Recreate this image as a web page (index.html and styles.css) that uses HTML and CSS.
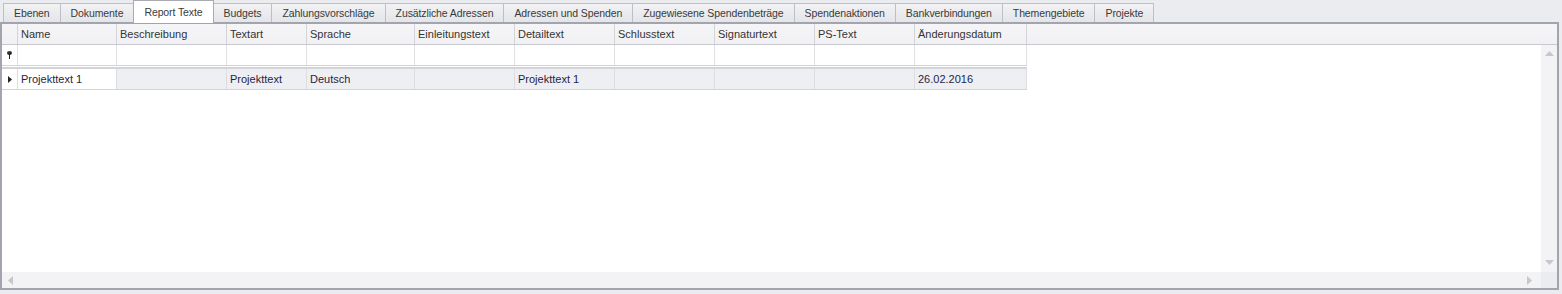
FILE: index.html
```html
<!DOCTYPE html>
<html lang="de">

<head>
  <meta charset="UTF-8">
  <title>Report Texte</title>
  <link rel="stylesheet" href="styles.css">
</head>

<body>
  <div id="tab-strip">
    <div class="tab">Ebenen</div>
    <div class="tab">Dokumente</div>
    <div class="tab selected">Report Texte</div>
    <div class="tab">Budgets</div>
    <div class="tab">Zahlungsvorschläge</div>
    <div class="tab">Zusätzliche Adressen</div>
    <div class="tab">Adressen und Spenden</div>
    <div class="tab">Zugewiesene Spendenbeträge</div>
    <div class="tab">Spendenaktionen</div>
    <div class="tab">Bankverbindungen</div>
    <div class="tab">Themengebiete</div>
    <div class="tab">Projekte</div>
  </div>

  <div id="grid-frame">
    <div class="grid-header">
      <div class="cell indicator"></div>
      <div class="cell c-name">Name</div>
      <div class="cell c-desc">Beschreibung</div>
      <div class="cell c-type">Textart</div>
      <div class="cell c-lang">Sprache</div>
      <div class="cell c-100">Einleitungstext</div>
      <div class="cell c-100">Detailtext</div>
      <div class="cell c-100">Schlusstext</div>
      <div class="cell c-100">Signaturtext</div>
      <div class="cell c-100">PS-Text</div>
      <div class="cell c-date">Änderungsdatum</div>
    </div>

    <div class="grid-body">
      <div class="rows">
        <div class="row filter-row">
          <div class="cell indicator">
            <svg width="5" height="8" viewBox="0 0 5 8">
              <ellipse cx="2.5" cy="2" rx="2.5" ry="2" fill="#222"/>
              <rect x="1.5" y="0.5" width="1" height="1" fill="#888"/>
              <rect x="2" y="3" width="1" height="5" fill="#222"/>
            </svg>
          </div>
          <div class="cell c-name"></div>
          <div class="cell c-desc"></div>
          <div class="cell c-type"></div>
          <div class="cell c-lang"></div>
          <div class="cell c-100"></div>
          <div class="cell c-100"></div>
          <div class="cell c-100"></div>
          <div class="cell c-100"></div>
          <div class="cell c-100"></div>
          <div class="cell c-date"></div>
        </div>
        <div class="row data-row">
          <div class="cell indicator">
            <svg width="4" height="7" viewBox="0 0 4 7">
              <path d="M0 0 L4 3.5 L0 7 Z" fill="#222"/>
            </svg>
          </div>
          <div class="cell c-name focused">Projekttext 1</div>
          <div class="cell c-desc"></div>
          <div class="cell c-type">Projekttext</div>
          <div class="cell c-lang">Deutsch</div>
          <div class="cell c-100"></div>
          <div class="cell c-100">Projekttext 1</div>
          <div class="cell c-100"></div>
          <div class="cell c-100"></div>
          <div class="cell c-100"></div>
          <div class="cell c-date">26.02.2016</div>
        </div>
      </div>
      <div class="vscroll">
        <svg width="9" height="5" viewBox="0 0 9 5"><path d="M0 5 L4.5 0 L9 5 Z" fill="#c6c7cc"/></svg>
        <svg width="9" height="5" viewBox="0 0 9 5"><path d="M0 0 L4.5 5 L9 0 Z" fill="#c6c7cc"/></svg>
      </div>
    </div>

    <div class="hscroll-row">
      <div class="hscroll">
        <svg width="5" height="9" viewBox="0 0 5 9"><path d="M5 0 L0 4.5 L5 9 Z" fill="#c6c7cc"/></svg>
        <svg width="5" height="9" viewBox="0 0 5 9"><path d="M0 0 L5 4.5 L0 9 Z" fill="#c6c7cc"/></svg>
      </div>
      <div class="corner"></div>
    </div>
  </div>
</body>

</html>
```

FILE: styles.css
```css
body {
  margin: 0;
  background-color: #ebecef;
  font-family: "Liberation Sans", Arial, sans-serif;
  font-size: 11px;
  color: #333;
}

#tab-strip {
  display: flex;
  height: 22px;
  padding-left: 3px;
  align-items: flex-end;
}

.tab {
  height: 18px;
  line-height: 18px;
  padding: 0 10px;
  border: 1px solid #bdbec6;
  border-bottom: none;
  margin-right: -1px;
  background: linear-gradient(#f2f2f4, #e4e5e9);
  color: #3a3a3a;
  font-size: 10.5px;
  letter-spacing: -0.1px;
  white-space: nowrap;
}

.tab.selected {
  height: 22px;
  line-height: 22px;
  background: #ffffff;
  border-color: #a9aab2;
  position: relative;
  margin-bottom: -1px;
  z-index: 1;
}

#grid-frame {
  width: 1555px;
  height: 264px;
  border: 2px solid #a3a4ad;
  display: flex;
  flex-direction: column;
  background-color: #ffffff;
}

.grid-header {
  display: flex;
  height: 20px;
  border-bottom: 1px solid #c9cad1;
  background: linear-gradient(#f5f5f7, #f1f1f3);
  color: #333;
}

.cell {
  height: 100%;
  box-sizing: border-box;
  border-right: 1px solid #d6d7dc;
  padding-left: 3px;
  line-height: 20px;
  white-space: nowrap;
  overflow: hidden;
}

.indicator {
  width: 16px;
  padding: 0;
  display: flex;
  align-items: center;
  justify-content: center;
}

.c-name { width: 99px; }
.c-desc { width: 110px; }
.c-type { width: 80px; }
.c-lang { width: 108px; }
.c-100 { width: 100px; }
.c-date { width: 112px; }

.grid-header .cell {
  border-right-color: #d3d4da;
}

.grid-body {
  flex: 1;
  display: flex;
  min-height: 0;
}

.rows {
  flex: 1;
}

.row {
  display: flex;
  height: 20px;
  width: 1025px;
}

.filter-row {
  border-bottom: 1px solid #d3d4d9;
}

.filter-row .cell {
  border-right-color: #e0e1e4;
}

.data-row {
  margin-top: 1px;
  border-top: 2px solid #d3d4d9;
  border-bottom: 1px solid #d3d4d9;
  background-color: #eeeff2;
  color: #1f1f45;
}

.data-row .cell {
  border-right-color: #dcdde1;
}

.data-row .indicator {
  background-color: #ffffff;
}

.focused {
  background-color: #ffffff;
}

.vscroll {
  width: 16px;
  background-color: #f3f3f5;
  display: flex;
  flex-direction: column;
  justify-content: space-between;
  align-items: center;
  padding: 6px 0 7px;
  box-sizing: border-box;
}

.hscroll-row {
  display: flex;
  height: 16px;
}

.hscroll {
  flex: 1;
  background-color: #f3f3f5;
  display: flex;
  justify-content: space-between;
  align-items: center;
  padding: 0 9px 0 6px;
}

.corner {
  width: 16px;
  background-color: #ebecef;
}
```
